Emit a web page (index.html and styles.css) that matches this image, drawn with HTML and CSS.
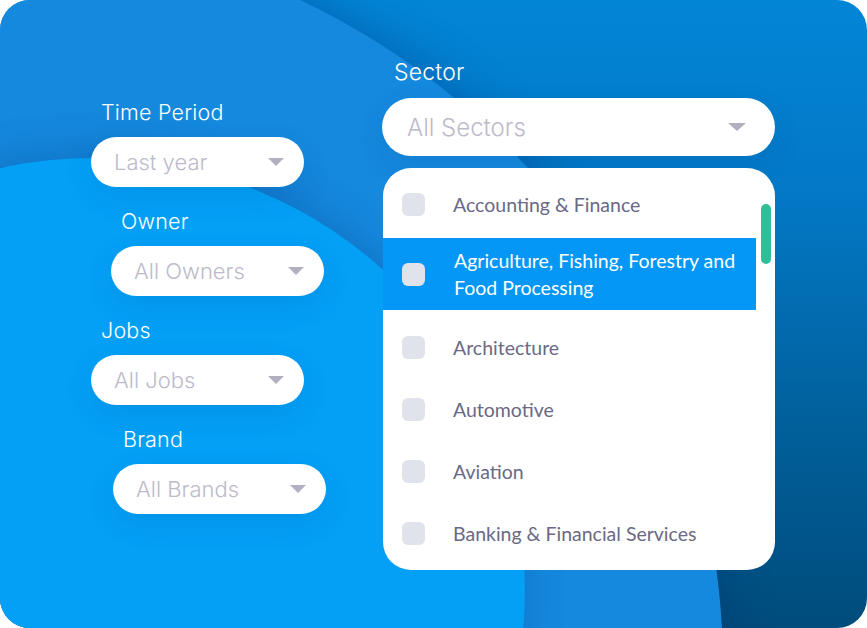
FILE: index.html
```html
<!DOCTYPE html>
<html lang="en">
<head>
<meta charset="utf-8">
<title>Filters</title>
<link rel="stylesheet" href="styles.css">
</head>
<body>
<div class="frame">
  <div class="blob blob-a"></div>
  <div class="blob blob-b"></div>
  <div class="layout">
    <div class="left">
      <div class="group">
        <div class="label">Time Period</div>
        <div class="pill"><span>Last year</span><span class="caret"></span></div>
      </div>
      <div class="group shift">
        <div class="label">Owner</div>
        <div class="pill"><span>All Owners</span><span class="caret"></span></div>
      </div>
      <div class="group">
        <div class="label">Jobs</div>
        <div class="pill"><span>All Jobs</span><span class="caret"></span></div>
      </div>
      <div class="group shift2">
        <div class="label">Brand</div>
        <div class="pill"><span>All Brands</span><span class="caret"></span></div>
      </div>
    </div>
    <div class="right">
      <div class="label label-lg">Sector</div>
      <div class="pill pill-lg"><span>All Sectors</span><span class="caret caret-lg"></span></div>
      <div class="list-card">
        <div class="list">
          <div class="row"><span class="check"></span><span class="item">Accounting &amp; Finance</span></div>
          <div class="row row-active"><span class="check"></span><span class="item">Agriculture, Fishing, Forestry and Food Processing</span></div>
          <div class="row"><span class="check"></span><span class="item">Architecture</span></div>
          <div class="row"><span class="check"></span><span class="item">Automotive</span></div>
          <div class="row"><span class="check"></span><span class="item">Aviation</span></div>
          <div class="row"><span class="check"></span><span class="item">Banking &amp; Financial Services</span></div>
        </div>
        <div class="track"><div class="thumb"></div></div>
      </div>
    </div>
  </div>
</div>
</body>
</html>
```
FILE: styles.css
```css
html, body {
  margin: 0;
  padding: 0;
  background: #ffffff;
}

.frame {
  position: relative;
  width: 867px;
  height: 628px;
  border-radius: 30px;
  overflow: hidden;
  background: linear-gradient(180deg, #0385d6 0%, #0379c7 30%, #015e98 70%, #004c7c 100%);
  font-family: "Inter", "Liberation Sans", sans-serif;
}

.blob {
  position: absolute;
  border-radius: 50%;
}

.blob-a {
  left: -755px;
  top: -71px;
  width: 1478px;
  height: 1478px;
  background: #1589de;
  box-shadow: 0 0 50px rgba(0, 40, 110, 0.35);
}

.blob-b {
  left: -339px;
  top: 158px;
  width: 864px;
  height: 864px;
  background: #03a0f6;
  box-shadow: 0 -8px 40px rgba(0, 50, 120, 0.24);
}

.layout {
  position: relative;
  display: flex;
  padding: 58px 0 0 91px;
}

.left {
  width: 291px;
  padding-top: 41px;
  display: flex;
  flex-direction: column;
  gap: 21px;
}

.group.shift {
  margin-left: 20px;
}

.group.shift2 {
  margin-left: 22px;
}

.label {
  color: #ffffff;
  font-size: 21.5px;
  font-weight: 350;
  letter-spacing: 0.2px;
  line-height: 26px;
  height: 26px;
  margin-left: 10px;
  margin-bottom: 12px;
}

.label-lg {
  font-size: 23px;
  line-height: 28px;
  height: 28px;
  margin-left: 12px;
  margin-bottom: 12px;
}

.pill {
  box-sizing: border-box;
  width: 213px;
  height: 50px;
  border-radius: 25px;
  background: #ffffff;
  display: flex;
  align-items: center;
  justify-content: space-between;
  padding: 0 20px 0 23px;
  color: #bdbaca;
  font-size: 22px;
  font-weight: 350;
  box-shadow: 0 10px 30px rgba(0, 40, 110, 0.1);
}

.caret {
  width: 0;
  height: 0;
  border-left: 8px solid transparent;
  border-right: 8px solid transparent;
  border-top: 8px solid #b2afc0;
}

.pill-lg {
  width: 393px;
  height: 58px;
  border-radius: 29px;
  padding: 0 29px 0 25px;
  font-size: 24px;
}

.caret-lg {
  border-left-width: 9px;
  border-right-width: 9px;
}

.right {
  width: 393px;
}

.list-card {
  margin-top: 12px;
  margin-left: 1px;
  width: 392px;
  height: 402px;
  border-radius: 28px;
  background: #ffffff;
  overflow: hidden;
  display: flex;
}

.list {
  width: 373px;
  padding-top: 5px;
}

.row {
  height: 62px;
  display: flex;
  align-items: center;
  padding-left: 19px;
  font-family: "Lato", "Noto Sans", sans-serif;
  font-size: 19.5px;
  color: #6a6986;
}

.row-active {
  height: 72px;
  margin-top: 3px;
  margin-bottom: 6px;
  background: #0497f5;
  color: #ffffff;
}

.row-active .item {
  max-width: 295px;
  line-height: 27px;
  margin-left: 1px;
}

.check {
  flex: none;
  width: 23px;
  height: 23px;
  border-radius: 6px;
  background: #e1e3ec;
  margin-right: 28px;
}

.track {
  width: 19px;
  padding-top: 36px;
}

.thumb {
  margin-left: 5px;
  width: 10px;
  height: 60px;
  border-radius: 5px;
  background: #31be97;
}
```
